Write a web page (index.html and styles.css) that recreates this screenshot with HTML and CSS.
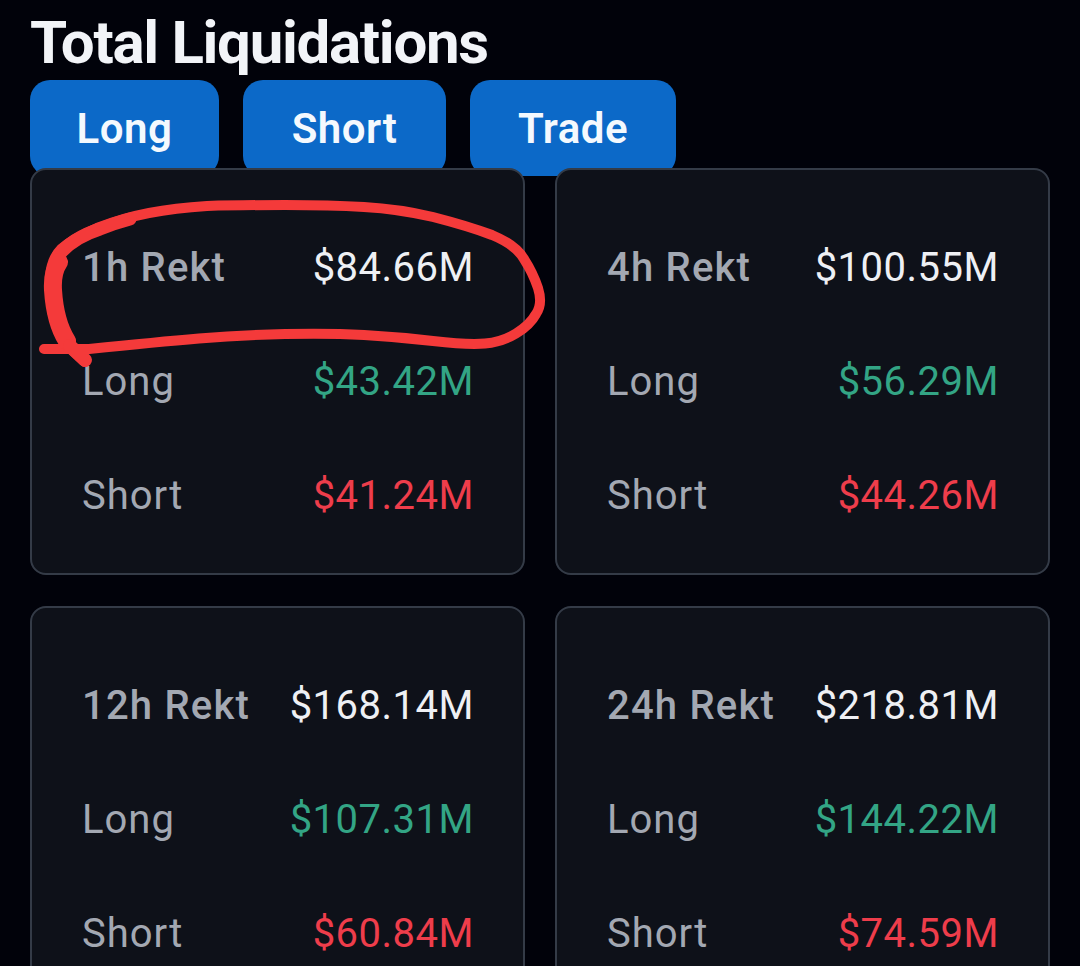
FILE: index.html
```html
<!DOCTYPE html>
<html lang="en">
<head>
    <meta charset="UTF-8">
    <title>Total Liquidations</title>
    <link rel="stylesheet" href="styles.css">
</head>
<body>
    <h1 class="title">Total Liquidations</h1>
    <div class="tabs">
        <button class="tab tab-long">Long</button>
        <button class="tab tab-short">Short</button>
        <button class="tab tab-trade">Trade</button>
    </div>
    <main class="cards">
        <section class="card">
            <div class="row"><span class="label">1h Rekt</span><span class="value">$84.66M</span></div>
            <div class="row"><span class="label thin">Long</span><span class="value green">$43.42M</span></div>
            <div class="row"><span class="label thin">Short</span><span class="value red">$41.24M</span></div>
        </section>
        <section class="card">
            <div class="row"><span class="label">4h Rekt</span><span class="value">$100.55M</span></div>
            <div class="row"><span class="label thin">Long</span><span class="value green">$56.29M</span></div>
            <div class="row"><span class="label thin">Short</span><span class="value red">$44.26M</span></div>
        </section>
        <section class="card">
            <div class="row"><span class="label">12h Rekt</span><span class="value">$168.14M</span></div>
            <div class="row"><span class="label thin">Long</span><span class="value green">$107.31M</span></div>
            <div class="row"><span class="label thin">Short</span><span class="value red">$60.84M</span></div>
        </section>
        <section class="card">
            <div class="row"><span class="label">24h Rekt</span><span class="value">$218.81M</span></div>
            <div class="row"><span class="label thin">Long</span><span class="value green">$144.22M</span></div>
            <div class="row"><span class="label thin">Short</span><span class="value red">$74.59M</span></div>
        </section>
    </main>
    <!-- hand drawn circle on top of the first card -->
    <svg class="scribble" width="1080" height="966" viewBox="0 0 1080 966" fill="none" stroke="#f43a3a" stroke-linecap="round" stroke-linejoin="round">
        <path stroke-width="10" d="M44 349 L89 349 Q158 342 199 338.5 Q240 335 285 334 Q330 333 364 335 Q399 337 433 341 Q468 345 485 343.5 Q502 342 516 333.5 Q530 325 536 314 Q543 304 538 288 Q533 273 524 259 Q516 245 492 235 Q468 226 433 217 Q399 209 364 207 Q330 205 285 205 Q240 205 207 206 Q175 208 149 213 Q123 218 97 228 Q72 239 61 249 Q51 259 50 278 Q49 297 53 315 Q58 332 71 349 L85 362"/>
        <path stroke-width="13" d="M58 256 Q72 238 100 229 Q115 223 130 219"/>
        <path stroke-width="18" d="M59 262 Q52 272 53 290 Q55 322 67 341"/>
        <path stroke-width="14" d="M70 346 L85 360"/>
    </svg>
</body>
</html>
```

FILE: styles.css
```css
*{
    margin: 0;
    padding: 0;
    box-sizing: border-box;
    font-family: Roboto, "Liberation Sans", sans-serif;
}

html, body{
    height: 100%;
    overflow: hidden;
}

body{
    background-color: #01020a;
    position: relative;
    padding: 0 30px;
}

.title{
    color: #f2f4f8;
    font-size: 60px;
    font-weight: 700;
    line-height: 80px;
    height: 80px;
    padding-top: 3px;
    letter-spacing: -1.3px;
}

.tabs{
    display: flex;
    gap: 24px;
}

.tab{
    height: 96px;
    background-color: #0c69c8;
    color: #f4f9fe;
    border: 0;
    border-radius: 20px;
    font-size: 42px;
    font-weight: 600;
    letter-spacing: 0.5px;
}
.tab-long{
    width: 189px;
}
.tab-short{
    width: 203px;
}
.tab-trade{
    width: 206px;
}

.cards{
    display: grid;
    grid-template-columns: 495px 495px;
    column-gap: 30px;
    row-gap: 31px;
    margin-top: -8px;
    position: relative;
}

.card{
    height: 407px;
    background-color: #0e1119;
    border: 2px solid #343b47;
    border-radius: 16px;
    padding: 40px 49px 0 50px;
}

.row{
    height: 114px;
    display: flex;
    justify-content: space-between;
    align-items: center;
    font-size: 40px;
}

.label{
    color: #a3a8b2;
    font-weight: 500;
    letter-spacing: 1.2px;
}
.thin{
    font-weight: 400;
    letter-spacing: 1px;
}

.value{
    color: #eef0f4;
    letter-spacing: 0.5px;
}
.green{
    color: #33a585;
}
.red{
    color: #ee3d4b;
}

.scribble{
    position: absolute;
    left: 0;
    top: 0;
}
```
